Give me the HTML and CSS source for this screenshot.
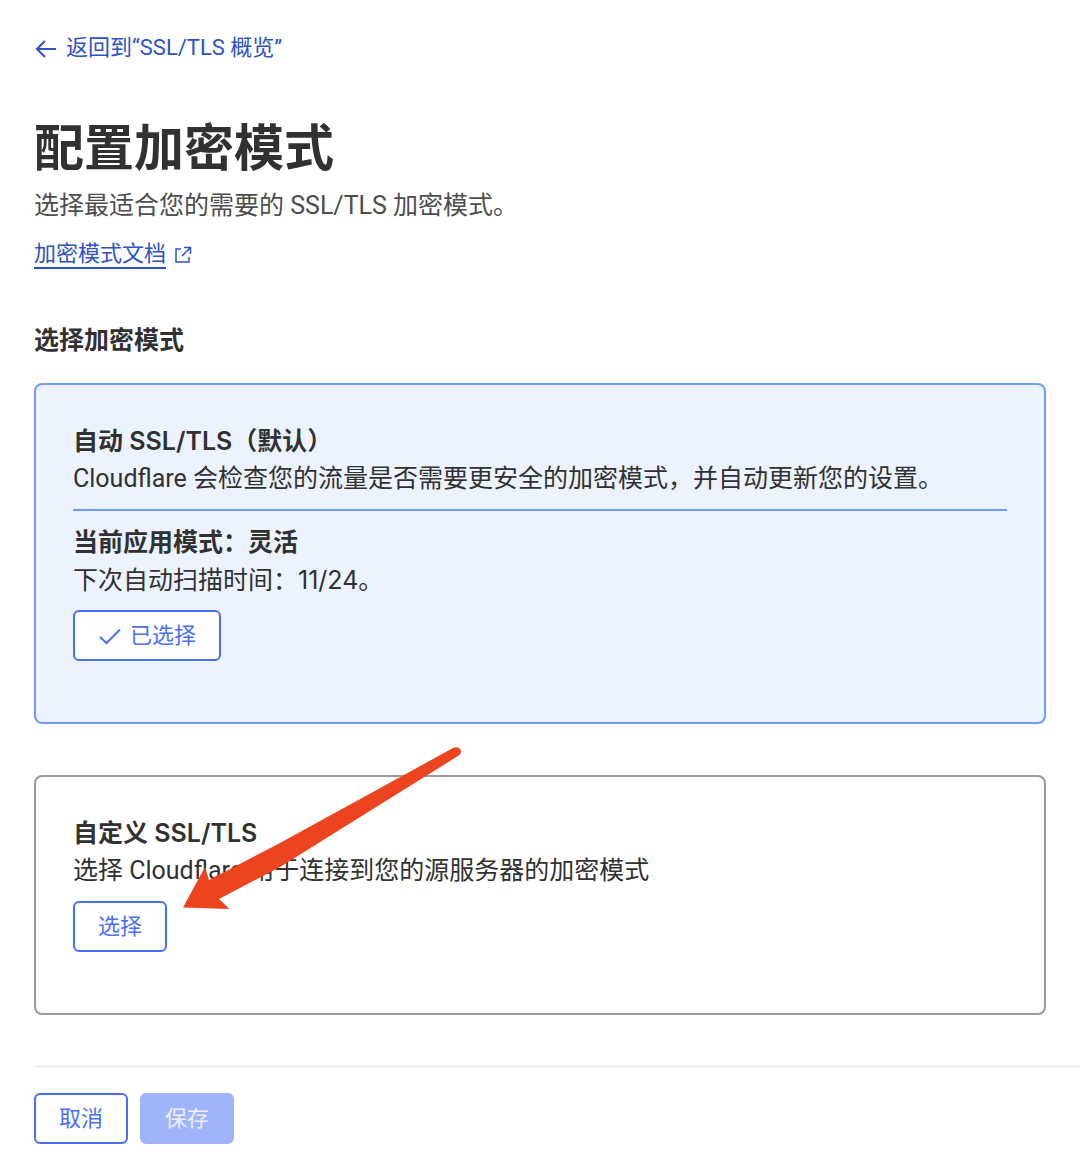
FILE: index.html
```html
<!DOCTYPE html>
<html lang="zh-CN">
<head>
  <meta charset="UTF-8" />
  <meta name="viewport" content="width=device-width, initial-scale=1" />
  <title>配置加密模式</title>
  <link rel="stylesheet" href="styles.css">
</head>
<body>
  <main class="page">
    <a class="back" href="#">
      <svg class="back-icon" viewBox="0 0 24 24" aria-hidden="true"><path d="M22 13H3M11 5L3 13L11 21" /></svg>
      <span>返回到“SSL/TLS 概览”</span>
    </a>

    <h1>配置加密模式</h1>
    <p class="intro">选择最适合您的需要的 SSL/TLS 加密模式。</p>
    <a class="docs" href="#">
      <span class="docs-text">加密模式文档</span>
      <svg class="docs-icon" viewBox="0 0 18 18" aria-hidden="true"><path d="M7 3H2V16H15V11M10 1.5H16.5V8M16 2L8 10" /></svg>
    </a>

    <h2>选择加密模式</h2>

    <section class="card card-active">
      <h3>自动 SSL/TLS（默认）</h3>
      <p>Cloudflare 会检查您的流量是否需要更安全的加密模式，并自动更新您的设置。</p>
      <hr />
      <h3>当前应用模式：灵活</h3>
      <p class="scan">下次自动扫描时间：11/24。</p>
      <button type="button" class="btn">
        <svg class="check" viewBox="0 0 24 24" aria-hidden="true"><path d="M2 13L8.500 19L22 5.500" /></svg>
        已选择
      </button>
    </section>

    <section class="card">
      <h3>自定义 SSL/TLS</h3>
      <p>选择 Cloudflare 用于连接到您的源服务器的加密模式</p>
      <button type="button" class="btn">选择</button>
      <svg class="arrow" viewBox="0 0 280 164" aria-hidden="true">
        <path d="M0 161.500L22 121L26 134L97 97L137 75L190 46L270 2Q275 0 277 3Q280 7 275 10L190 63L97 121L36 153L46.500 163Z" />
      </svg>
    </section>
  </main>

  <footer class="actions">
    <button type="button" class="btn">取消</button>
    <button type="button" class="btn btn-primary" disabled>保存</button>
  </footer>
</body>
</html>
```

FILE: styles.css
```css
* { box-sizing: border-box; }
body {
  margin: 0;
  background: #fff;
  color: #313131;
  font-family: Roboto, "Noto Sans CJK SC", sans-serif;
  font-size: 25px;
  line-height: 38px;
}
h1, h2, h3, p { margin: 0; }
h1, h2, h3, .scan { font-family: Inter, "Noto Sans CJK SC", sans-serif; }
h2, h3 { font-size: 25px; font-weight: 600; }
a { color: #2c52c4; font-size: 22px; text-decoration: none; }
svg { fill: none; stroke: currentColor; stroke-width: 2; flex-shrink: 0; }

.page { padding: 29px 34px 50px; }

.back { display: flex; align-items: center; gap: 8px; }
.back-icon { width: 24px; height: 24px; }

h1 {
  margin-top: 51px;
  font-size: 50px;
  line-height: 60px;
  font-weight: 600;
}
.intro { margin-top: 9px; color: #4d4d4d; }

.docs { display: flex; align-items: center; gap: 8px; margin-top: 16px; }
.docs-text { line-height: 26px; border-bottom: 2px solid #2c52c4; }
.docs-icon { width: 18px; height: 18px; stroke-width: 1.5; }

h2 { margin: 52px 0 24px; }

.card {
  position: relative;
  padding: 37px 37px 61px;
  border: 2px solid #9b9b9b;
  border-radius: 8px;
}
.card + .card { margin-top: 51px; }
.card-active { background: #ecf3fe; border-color: #6e9cfb; }
.card hr {
  height: 2px;
  margin: 11px 0 12px;
  border: 0;
  background: #6e9cfb;
}
.card .btn { margin-top: 11px; }

.btn {
  display: flex;
  align-items: center;
  gap: 8px;
  height: 51px;
  padding: 0 23px;
  border: 2px solid #4770f6;
  border-radius: 6px;
  background: #fff;
  color: #4770f6;
  font-family: inherit;
  font-size: 22px;
  line-height: 38px;
}
.check { width: 24px; height: 24px; }
.btn-primary { background: #9fb4fb; border-color: #9fb4fb; color: #ecf0fe; }

/* flecha que señala el botón */
.arrow {
  position: absolute;
  left: 147px;
  top: -31px;
  width: 280px;
  height: 164px;
  overflow: visible;
  fill: #eb441f;
  stroke: none;
  pointer-events: none;
}

.actions {
  display: flex;
  gap: 12px;
  margin-left: 34px;
  padding: 25px 0;
  border-top: 3px solid #f2f2f2;
}
```
